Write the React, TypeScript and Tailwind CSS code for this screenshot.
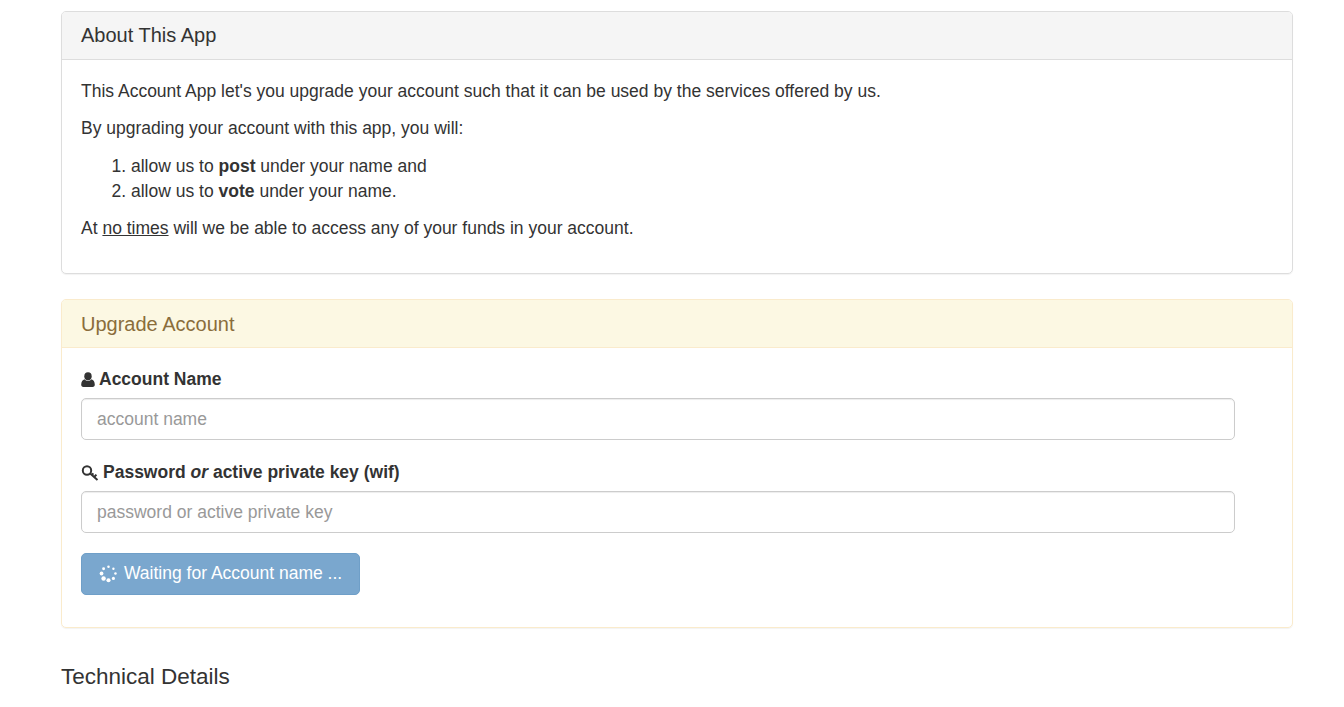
function UserIcon() {
  return (
    <svg viewBox="0 0 14 15" className="w-[14px] h-[15px] shrink-0 text-[#333]" fill="currentColor">
      <ellipse cx="7" cy="4.2" rx="3.7" ry="4" />
      <path d="M3.6 7.2C1.4 7.8 0.4 9.4 0.2 12.6C0.1 14 1 15 2.4 15H11.6C13 15 13.9 14 13.8 12.6C13.6 9.4 12.6 7.8 10.4 7.2C9.6 8.2 8.4 8.8 7 8.8C5.6 8.8 4.4 8.2 3.6 7.2Z" />
    </svg>
  );
}

function KeyIcon() {
  return (
    <svg viewBox="0 0 18 18" className="w-[18px] h-[18px] shrink-0 text-[#333]" fill="none" stroke="currentColor">
      <circle cx="6" cy="6.5" r="4.2" strokeWidth="2" />
      <path d="M9.2 9.6L16.5 16M13.2 13l2.2-2.4M10.8 11l1.6-1.6" strokeWidth="2" />
    </svg>
  );
}

function Spinner() {
  const dots = [
    [12, 3.5, 1.6],
    [18.2, 6, 1.5],
    [20.8, 12, 1.6],
    [18.2, 18.2, 2],
    [12, 20.6, 2.6],
    [5.8, 18.2, 2.8],
    [3.2, 12, 2.4],
    [5.8, 6, 1.8],
  ];
  return (
    <svg viewBox="0 0 24 24" className="w-[19px] h-[19px] shrink-0" fill="currentColor">
      {dots.map(([cx, cy, r]) => (
        <circle key={`${cx}-${cy}`} cx={cx} cy={cy} r={r} />
      ))}
    </svg>
  );
}

export default function App() {
  return (
    <div className="min-h-screen bg-white pl-[61px] pr-[51px] pt-[11px] font-['Liberation_Sans',Arial,sans-serif] text-[17.5px] leading-[25px] text-[#333]">
      <div className="border border-[#ddd] rounded-[5px] h-[263px] mb-[25px] shadow-[0_1px_1px_rgba(0,0,0,0.05)]">
        <div className="h-[48px] px-[19px] flex items-center bg-[#f5f5f5] border-b border-[#ddd] rounded-t-[4px] text-[20px]">
          About This App
        </div>
        <div className="px-[19px] pt-[19px]">
          <p className="mb-[12px]">This Account App let's you upgrade your account such that it can be used by the services offered by us.</p>
          <p className="mb-[13px]">By upgrading your account with this app, you will:</p>
          <ol className="list-decimal pl-[50px] mb-[12px]">
            <li>allow us to <b>post</b> under your name and</li>
            <li>allow us to <b>vote</b> under your name.</li>
          </ol>
          <p>At <u>no times</u> will we be able to access any of your funds in your account.</p>
        </div>
      </div>

      <div className="border border-[#faebcc] rounded-[5px] h-[329px] mb-[33px] shadow-[0_1px_1px_rgba(0,0,0,0.05)]">
        <div className="h-[48px] pt-[1px] px-[19px] flex items-center bg-[#fcf8e3] border-b border-[#faebcc] rounded-t-[4px] text-[20px] text-[#8a6d3b]">
          Upgrade Account
        </div>
        <div className="px-[19px] pt-[19px]">
          <label className="flex items-center gap-[4px] font-bold h-[25px] mb-[6px]">
            <UserIcon />
            <span>Account Name</span>
          </label>
          <input
            placeholder="account name"
            className="block w-[1154px] h-[42px] px-[15px] bg-white border border-[#ccc] rounded-[5px] shadow-[inset_0_1px_1px_rgba(0,0,0,0.075)] placeholder:text-[#999] outline-none"
          />
          <label className="flex items-center gap-[4px] font-bold h-[25px] mt-[20px] mb-[6px]">
            <KeyIcon />
            <span>Password <i>or</i> active private key (wif)</span>
          </label>
          <input
            placeholder="password or active private key"
            className="block w-[1154px] h-[42px] px-[15px] bg-white border border-[#ccc] rounded-[5px] shadow-[inset_0_1px_1px_rgba(0,0,0,0.075)] placeholder:text-[#999] outline-none"
          />
          <button className="mt-[20px] h-[42px] w-[279px] flex items-center gap-[6px] px-[17px] pb-[2px] bg-[#7aa7ce] border border-[#6f9fc8] rounded-[5px] text-white whitespace-nowrap">
            <Spinner />
            <span>Waiting for Account name ...</span>
          </button>
        </div>
      </div>

      <h3 className="text-[22.5px] leading-[30px] pt-[1px] text-[#333]">Technical Details</h3>
    </div>
  );
}
